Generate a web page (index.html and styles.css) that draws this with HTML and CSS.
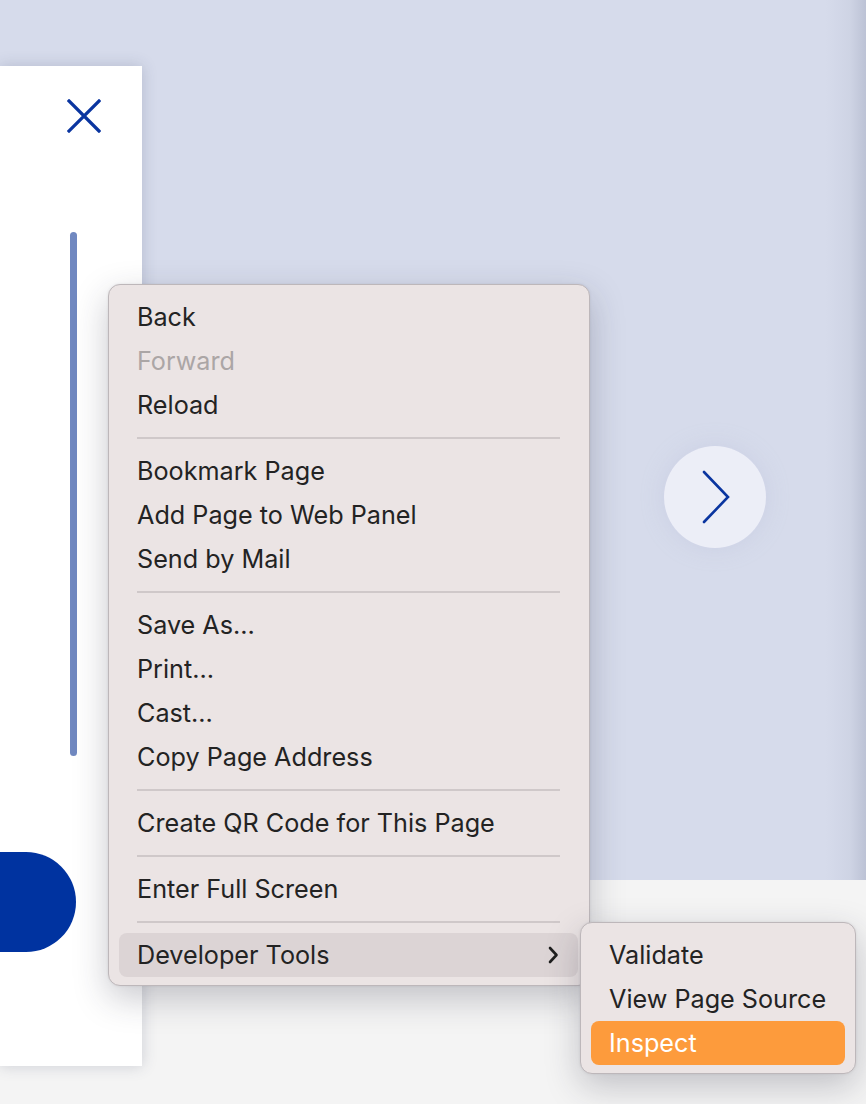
FILE: index.html
```html
<!DOCTYPE html>
<html lang="en">
<head>
<meta charset="utf-8">
<title>Context menu</title>
<link rel="stylesheet" href="styles.css">
</head>
<body>
<div class="page">
  <aside class="drawer">
    <button class="close" aria-label="Close">
      <svg width="34" height="34" viewBox="0 0 34 34"><path d="M2 2 L32 32 M32 2 L2 32" stroke="#0a35a0" stroke-width="3.2" stroke-linecap="square" fill="none"/></svg>
    </button>
    <div class="scroll-track"><div class="scroll-thumb"></div></div>
    <div class="pill"></div>
  </aside>
  <main class="stage">
    <button class="next" aria-label="Next">
      <svg width="30" height="54" viewBox="0 0 30 54"><path d="M3 2 L27 27 L3 52" stroke="#0a35a0" stroke-width="2.6" stroke-linecap="round" stroke-linejoin="miter" fill="none"/></svg>
    </button>
  </main>
  <div class="edge-shadow"></div>

  <ul class="menu main-menu">
    <li class="item">Back</li>
    <li class="item disabled">Forward</li>
    <li class="item">Reload</li>
    <li class="sep"></li>
    <li class="item">Bookmark Page</li>
    <li class="item">Add Page to Web Panel</li>
    <li class="item">Send by Mail</li>
    <li class="sep"></li>
    <li class="item">Save As…</li>
    <li class="item">Print…</li>
    <li class="item">Cast…</li>
    <li class="item">Copy Page Address</li>
    <li class="sep"></li>
    <li class="item">Create QR Code for This Page</li>
    <li class="sep"></li>
    <li class="item">Enter Full Screen</li>
    <li class="sep"></li>
    <li class="item open">Developer Tools
      <svg class="chev" width="12" height="20" viewBox="0 0 12 20"><path d="M3 3 L9.5 10 L3 17" stroke="#1f1f1f" stroke-width="2.6" stroke-linecap="round" stroke-linejoin="round" fill="none"/></svg>
    </li>
  </ul>

  <ul class="menu sub-menu">
    <li class="item">Validate</li>
    <li class="item">View Page Source</li>
    <li class="item active">Inspect</li>
  </ul>
</div>
</body>
</html>
```

FILE: styles.css
```css
* { box-sizing: border-box; }
html, body { margin: 0; padding: 0; }
body {
  width: 866px;
  height: 1104px;
  overflow: hidden;
  font-family: "Inter", "Noto Sans", "Liberation Sans", sans-serif;
}
.page {
  position: relative;
  width: 866px;
  height: 1104px;
  display: flex;
  background: linear-gradient(to bottom, #d6dbeb 0, #d6dbeb 880px, #f4f4f4 880px, #f4f4f4 100%);
}
.edge-shadow {
  position: absolute;
  top: 0;
  right: 0;
  width: 40px;
  height: 880px;
  background: linear-gradient(to right, rgba(150,158,180,0) 0, rgba(150,158,180,0.12) 60%, rgba(140,148,172,0.35) 100%);
  pointer-events: none;
}
.drawer {
  width: 142px;
  height: 1000px;
  margin-top: 66px;
  background: #ffffff;
  box-shadow: 0 0 14px rgba(60,70,100,0.22);
  display: flex;
  flex-direction: column;
  align-items: flex-end;
  position: relative;
  z-index: 1;
}
.close {
  margin: 33px 41px 0 0;
  width: 34px;
  height: 34px;
  padding: 0;
  border: 0;
  background: none;
  display: block;
}
.close svg { display: block; }
.scroll-track {
  margin: 99px 65px 0 0;
  width: 7px;
  height: 524px;
}
.scroll-thumb {
  width: 7px;
  height: 100%;
  border-radius: 4px;
  background: #7088c0;
}
.pill {
  margin: 96px 66px 0 0;
  width: 200px;
  height: 100px;
  border-radius: 0 50px 50px 0;
  background: #0033a0;
}
.stage {
  flex: 1;
  display: flex;
  justify-content: flex-end;
  padding: 446px 100px 0 0;
}
.next {
  width: 102px;
  height: 102px;
  border-radius: 50%;
  border: 0;
  padding: 0;
  background: #eceef7;
  box-shadow: 0 0 22px rgba(180,186,215,0.35);
  display: flex;
  align-items: center;
  justify-content: center;
}
.next svg { display: block; margin-left: 1px; }

.menu {
  position: absolute;
  list-style: none;
  margin: 0;
  background: #ebe4e4;
  border: 1px solid #bdb7ba;
  border-radius: 12px;
  box-shadow: 0 12px 34px rgba(40,40,60,0.25), 0 0 3px rgba(0,0,0,0.08);
  z-index: 5;
}
.main-menu {
  left: 108px;
  top: 284px;
  width: 482px;
  padding: 10px 11px 8px 10px;
}
.sub-menu {
  left: 580px;
  top: 922px;
  width: 276px;
  padding: 10px 10px 8px 10px;
  z-index: 6;
}
.item {
  height: 44px;
  display: flex;
  align-items: center;
  padding: 0 18px;
  font-size: 25.2px;
  color: #232323;
  border-radius: 8px;
  white-space: nowrap;
}
.item.disabled { color: #aba6a6; }
.item.open {
  background: #dcd4d5;
  justify-content: space-between;
  padding-right: 19px;
}
.item.active {
  background: #fd9b3c;
  color: #ffffff;
}
.sep {
  height: 22px;
  margin: 0 18px 0 18px;
  display: flex;
  align-items: center;
}
.sep::before {
  content: "";
  display: block;
  width: 100%;
  height: 2px;
  background: #cfc8c9;
}
.chev { display: block; }
```
